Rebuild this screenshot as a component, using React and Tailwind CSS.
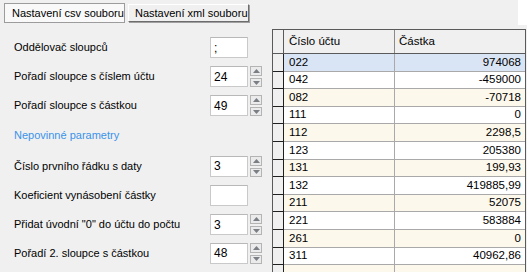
// Nastaveni importu: leva cast formular, prava cast nahled nactenych dat.

const FIELDS = [
  { label: "Oddělovač sloupců", value: ";", spin: false, h: "h-[29px]" },
  { label: "Pořadí sloupce s číslem účtu", value: "24", spin: true, h: "h-[29px]" },
  { label: "Pořadí sloupce s částkou", value: "49", spin: true, h: "h-[29px]" },
  { section: "Nepovinné parametry", h: "h-[31px]" },
  { label: "Číslo prvního řádku s daty", value: "3", spin: true, h: "h-[30px]" },
  { label: "Koeficient vynásobení částky", value: "", spin: false, h: "h-[29px]" },
  { label: 'Přidat úvodní "0" do účtu do počtu', value: "3", spin: true, h: "h-[29px]" },
  { label: "Pořadí 2. sloupce s částkou", value: "48", spin: true, h: "h-[28px]" },
];

const ROWS = [
  ["022", "974068"],
  ["042", "-459000"],
  ["082", "-70718"],
  ["111", "0"],
  ["112", "2298,5"],
  ["123", "205380"],
  ["131", "199,93"],
  ["132", "419885,99"],
  ["211", "52075"],
  ["221", "583884"],
  ["261", "0"],
  ["311", "40962,86"],
  ["", ""],
];

function Arrow({ down }) {
  return (
    <svg width="7" height="4" viewBox="0 0 7 4" className={down ? "rotate-180" : ""}>
      <path d="M0 4 L3.5 0 L7 4 Z" fill="#7a7f86" />
    </svg>
  );
}

function Spinner() {
  return (
    <div className="ml-[2px] flex flex-col gap-[2px] self-center">
      <div className="w-[12px] h-[10px] border border-[#b4b4b4] bg-[#ebebeb] flex items-center justify-center">
        <Arrow />
      </div>
      <div className="w-[12px] h-[9px] border border-[#b4b4b4] bg-[#ebebeb] flex items-center justify-center">
        <Arrow down />
      </div>
    </div>
  );
}

export default function App() {
  return (
    <div
      className="w-[527px] h-[272px] overflow-hidden bg-[#f0f0f0] flex text-black"
      style={{ fontFamily: '"Liberation Sans", Arial, sans-serif' }}
    >
      <div className="w-[272px] shrink-0 flex flex-col">
        <div className="flex items-start pl-[4px] pt-[3px] gap-[3px] text-[11px]">
          <div className="h-[20px] w-[121px] border border-[#9c9c9c] bg-[#f9f9f9] flex items-center pl-[7px]">
            Nastavení csv souboru
          </div>
          <div className="mt-[1px] h-[18px] w-[121px] border border-t-white border-l-white border-r-[#6d6d6d] border-b-[#6d6d6d] bg-[#f0f0f0] flex items-center pl-[6px] shadow-[1px_1px_0_#a0a0a0]">
            Nastavení xml souboru
          </div>
        </div>

        <div className="mt-[10px] flex flex-col pl-[14px] text-[11px]">
          {FIELDS.map((f, i) =>
            f.section ? (
              <div key={i} className={`${f.h} flex items-center text-[#3a93ea]`}>
                {f.section}
              </div>
            ) : (
              <div key={i} className={`${f.h} flex items-center`}>
                <span className="w-[196px]">{f.label}</span>
                <div className="w-[38px] h-[21px] bg-white border border-[#c9c9c9] border-t-[#b8b8b8] flex items-center pl-[3px] text-[12px]">
                  {f.value}
                </div>
                {f.spin && <Spinner />}
              </div>
            )
          )}
        </div>
      </div>

      <div className="flex-1 flex flex-col relative">
        <div className="absolute right-0 top-0 w-[9px] h-[25px] bg-white" />
        <div className="mt-[29px] mr-[1px] border border-[#5a5a5a] bg-white text-[11.5px] flex-1">
          <div className="flex h-[24px] bg-[#f0f0f0] border-b border-[#5a5a5a]">
            <div className="w-[11px] border-r border-[#5a5a5a]" />
            <div className="w-[111px] border-r border-[#8a8a8a] flex items-center pl-[5px]">Číslo účtu</div>
            <div className="flex-1 flex items-center pl-[4px]">Částka</div>
          </div>
          {ROWS.map(([acc, amt], i) => {
            const bg = i === 0 ? "bg-[#d9e5f4]" : i % 2 === 0 ? "bg-[#fdf8ec]" : "bg-white";
            return (
              <div key={i} className="flex h-[17.6px]">
                <div className="w-[11px] bg-[#f0f0f0] border-r border-b border-[#202020]" />
                <div className={`w-[111px] ${bg} border-r border-b border-[#a9a9a9] flex items-center pl-[5px]`}>
                  {acc}
                </div>
                <div className={`flex-1 ${bg} border-b border-[#a9a9a9] flex items-center justify-end pr-[4px]`}>
                  {amt}
                </div>
              </div>
            );
          })}
        </div>
      </div>
    </div>
  );
}
